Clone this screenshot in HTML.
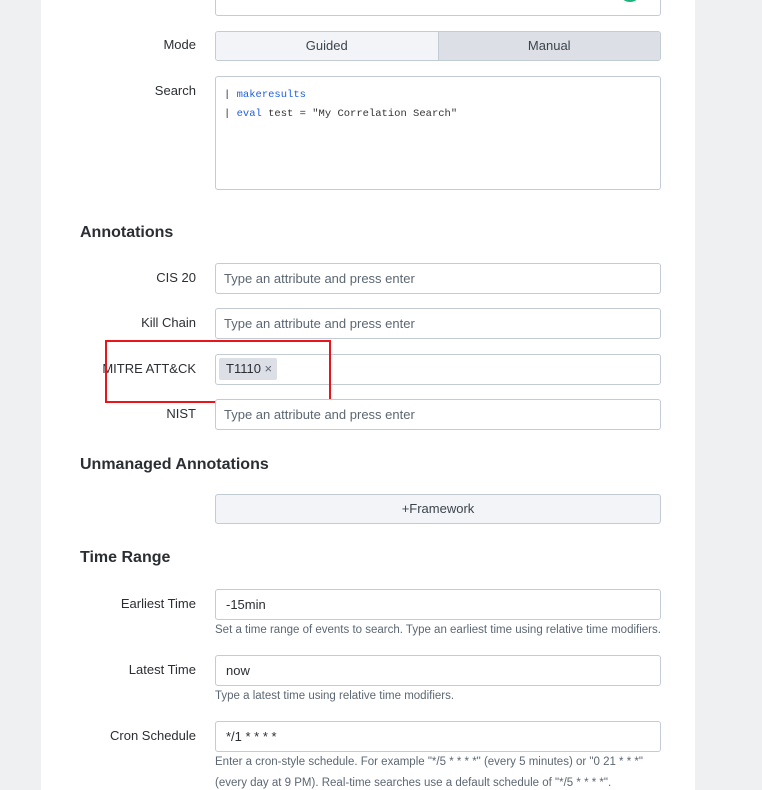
<!DOCTYPE html>
<html><head><style>
body{margin:0;width:762px;height:790px;background:#eff0f2;font-family:"Liberation Sans",sans-serif;position:relative;overflow:hidden;color:#2b2e33}
.panel{position:absolute;left:41px;top:0;width:654px;height:790px;background:#fff}
.a{position:absolute}
.lbl{position:absolute;right:566px;font-size:13px;color:#2b2e33;text-align:right;white-space:nowrap}
.in{position:absolute;left:215px;width:444px;height:29px;border:1px solid #c3cbd4;border-radius:3px;background:#fff;box-sizing:content-box}
.ph{position:absolute;left:8px;top:7px;font-size:13px;color:#5c6773}
.val{position:absolute;left:10px;top:7px;font-size:13px;color:#2b2e33}
.h{position:absolute;left:80px;font-size:16px;font-weight:bold;color:#2b2e33}
.help{position:absolute;left:215px;font-size:11.5px;color:#5c6773;white-space:nowrap}
</style></head><body>
<div class="panel"></div>
<div class="in" style="top:-15px;height:29px"></div>
<div class="a" style="left:622px;top:-8px;width:16px;height:10px;border-radius:50%;background:#1ab57a"></div>

<div class="lbl" style="top:37px">Mode</div>
<div class="a" style="left:215px;top:31px;width:444px;height:28px;border:1px solid #c3cbd4;border-radius:3px;overflow:hidden;display:flex;font-size:13px">
<div style="flex:1;background:#f2f4f7;text-align:center;line-height:28px;color:#3c444d;border-right:1px solid #c3cbd4">Guided</div>
<div style="flex:1;background:#dce0e6;text-align:center;line-height:28px;color:#3c444d">Manual</div></div>

<div class="lbl" style="top:83px">Search</div>
<div class="a" style="left:215px;top:76px;width:444px;height:112px;border:1px solid #c3cbd4;border-radius:3px;font-family:'Liberation Mono',monospace;font-size:10.5px;color:#333">
<div style="position:absolute;left:8px;top:12px">| <span style="color:#1f5fe0">makeresults</span></div>
<div style="position:absolute;left:8px;top:31px">| <span style="color:#1f5fe0">eval</span> test = "My Correlation Search"</div></div>

<div class="h" style="top:224px">Annotations</div>
<div class="lbl" style="top:270px">CIS 20</div>
<div class="in" style="top:263px"><span class="ph">Type an attribute and press enter</span></div>
<div class="lbl" style="top:315px">Kill Chain</div>
<div class="in" style="top:308px"><span class="ph">Type an attribute and press enter</span></div>
<div class="lbl" style="top:361px">MITRE ATT&amp;CK</div>
<div class="in" style="top:354px"><span class="a" style="left:3px;top:3px;height:22px;width:58px;background:#dce0e6;border-radius:2px;font-size:13px;line-height:22px;padding-left:7px;box-sizing:border-box">T1110 <span style="color:#5c6773">×</span></span></div>
<div class="a" style="left:105px;top:340px;width:222px;height:59px;border:2px solid #e8151b"></div>
<div class="lbl" style="top:406px">NIST</div>
<div class="in" style="top:399px"><span class="ph">Type an attribute and press enter</span></div>

<div class="h" style="top:456px">Unmanaged Annotations</div>
<div class="a" style="left:215px;top:494px;width:444px;height:28px;border:1px solid #c3cbd4;border-radius:3px;background:#f2f4f7;text-align:center;line-height:28px;font-size:13px;color:#3c444d">+Framework</div>

<div class="h" style="top:549px">Time Range</div>
<div class="lbl" style="top:596px">Earliest Time</div>
<div class="in" style="top:589px"><span class="val">-15min</span></div>
<div class="help" style="top:624px">Set a time range of events to search. Type an earliest time using relative time modifiers.</div>
<div class="lbl" style="top:662px">Latest Time</div>
<div class="in" style="top:655px"><span class="val">now</span></div>
<div class="help" style="top:690px">Type a latest time using relative time modifiers.</div>
<div class="lbl" style="top:728px">Cron Schedule</div>
<div class="in" style="top:721px"><span class="val">*/1 * * * *</span></div>
<div class="help" style="top:756px">Enter a cron-style schedule. For example "*/5 * * * *" (every 5 minutes) or "0 21 * * *"</div>
<div class="help" style="top:777px">(every day at 9 PM). Real-time searches use a default schedule of "*/5 * * * *".</div>
</body></html>
